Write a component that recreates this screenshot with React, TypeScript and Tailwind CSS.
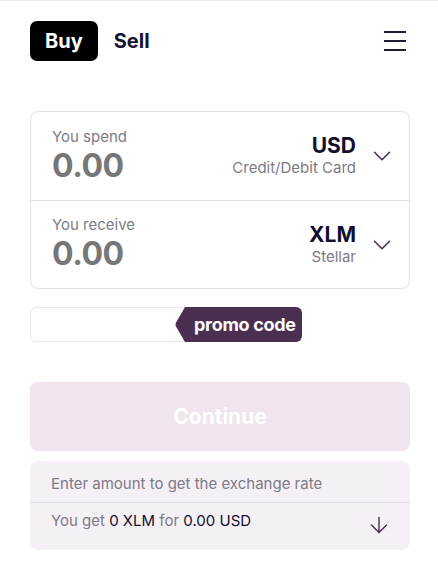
import React from "react";
import { ChevronDown, ArrowDown } from "lucide-react";

const font = { fontFamily: "Inter, 'Noto Sans', sans-serif" };

function Row({ label, cur, sub, border }: { label: string; cur: string; sub: string; border?: boolean }) {
  return (
    <div className={`flex items-center h-[88px] pl-[21px] pr-[12px] ${border ? "border-t border-[#e4e1e6]" : ""}`}>
      <div className="flex flex-col flex-1 -mt-[2px]">
        <span className="text-[15px] leading-[18px] text-[#7c7b86]">{label}</span>
        <span className="mt-[3px] text-[32px] leading-[34px] font-bold text-[#777777] tracking-[-0.5px]">0.00</span>
      </div>
      <div className="flex flex-col items-end">
        <span className="text-[21px] leading-[24px] font-bold text-[#10102e]">{cur}</span>
        <span className="text-[15px] leading-[20px] text-[#7c7b86]">{sub}</span>
      </div>
      <ChevronDown className="ml-[11px] text-[#4b2f51]" size={30} strokeWidth={1.3} />
    </div>
  );
}

export default function App() {
  return (
    <div style={font} className="w-[438px] h-[566px] bg-white border-t border-[#ebebeb] pl-[30px] pr-[28px]">
      <div className="flex items-center h-[80px]">
        <div className="h-[40px] px-[15px] flex items-center rounded-[7px] bg-black text-white text-[20px] font-bold">Buy</div>
        <div className="ml-[16px] text-[20px] font-bold text-[#141432]">Sell</div>
        <div className="ml-auto mr-[4px] flex flex-col gap-[7px]">
          <div className="w-[22px] h-[2px] bg-[#1c1c34]" />
          <div className="w-[22px] h-[2px] bg-[#1c1c34]" />
          <div className="w-[22px] h-[2px] bg-[#1c1c34]" />
        </div>
      </div>
      <div className="mt-[30px] border border-[#e4e1e6] rounded-[8px]">
        <Row label="You spend" cur="USD" sub="Credit/Debit Card" />
        <Row label="You receive" cur="XLM" sub="Stellar" border />
      </div>
      <div className="mt-[18px] flex items-center h-[35px]">
        <div className="w-[158px] h-[35px] border border-[#e8e6ea] rounded-[6px] bg-white" />
        <div className="flex h-[35px] -ml-[13px]">
          <svg width="12" height="35" viewBox="0 0 12 35" className="block">
            <path d="M12 0 L10 0 L1 15.5 Q0 17.5 1 19.5 L10 35 L12 35 Z" fill="#4b2f51" />
          </svg>
          <div className="h-[35px] bg-[#4b2f51] rounded-r-[6px] pl-[7px] pr-[6px] flex items-center text-white text-[18px] font-bold tracking-[-0.3px]">promo code</div>
        </div>
      </div>
      <div className="mt-[40px] h-[69px] rounded-[8px] bg-[#f0e4ee] flex items-center justify-center text-white text-[21px] font-bold">Continue</div>
      <div className="mt-[10px] rounded-[8px] bg-[#f5f0f6] text-[15px]">
        <div className="h-[42px] flex items-center px-[21px] pt-[6px] border-b border-[#e3dde5] text-[#7c7b86]">Enter amount to get the exchange rate</div>
        <div className="h-[47px] flex items-center pl-[21px] pr-[18px] pb-[10px]">
          <span className="text-[#7c7b86]">You get <span className="text-[#10102e]">0 XLM</span> for <span className="text-[#10102e]">0.00 USD</span></span>
          <ArrowDown className="ml-auto mt-[6px] text-[#4b2f51]" size={26} strokeWidth={1.3} />
        </div>
      </div>
    </div>
  );
}
